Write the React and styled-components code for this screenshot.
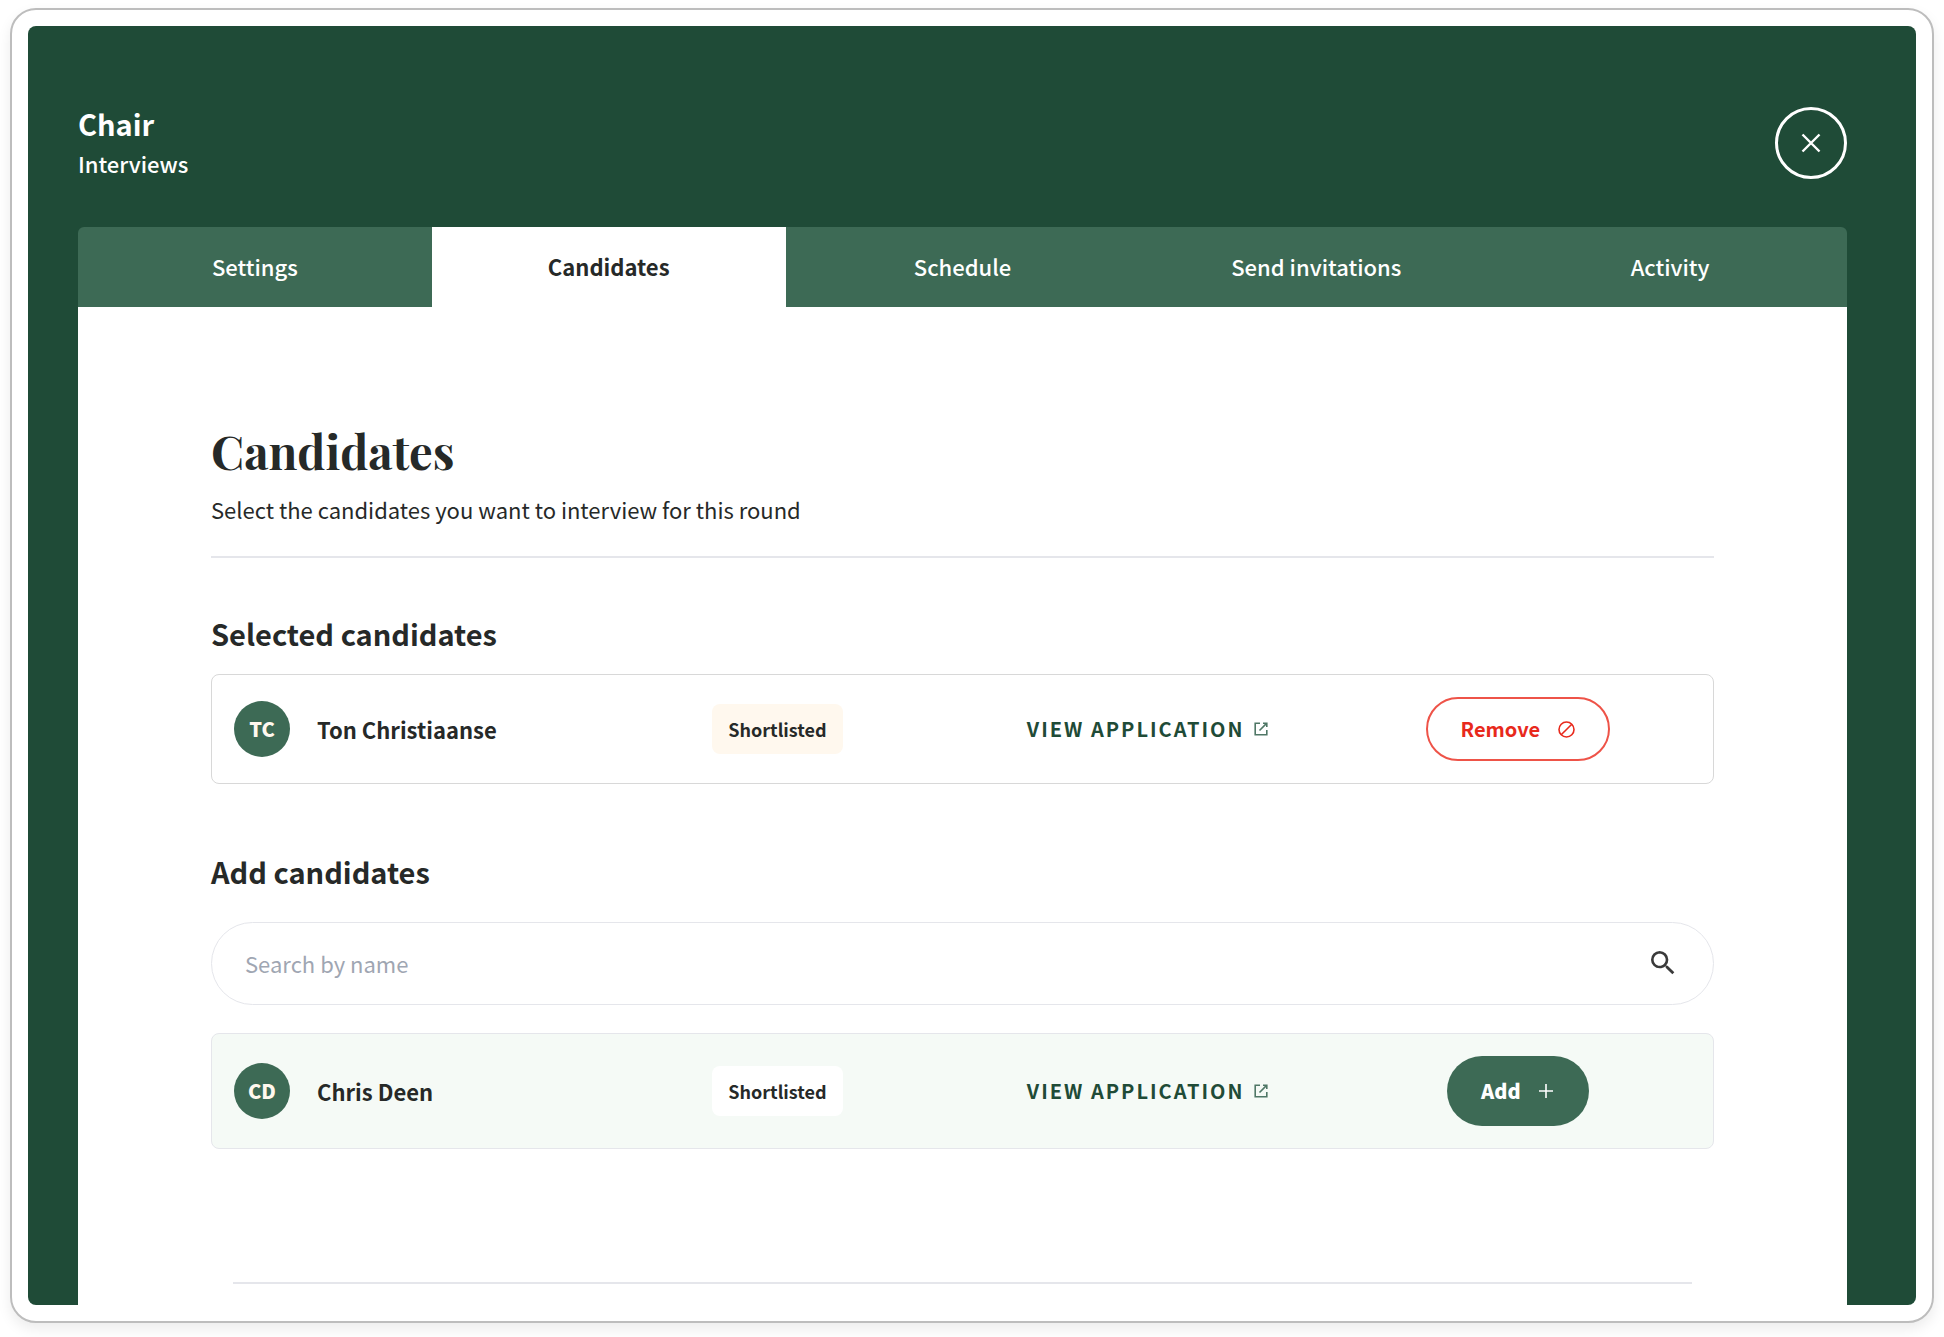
import React, { useState } from 'react'
import styled, { createGlobalStyle } from 'styled-components'
import { MdSearch } from 'react-icons/md'

const GlobalStyle = createGlobalStyle`
  :root {
    --forest: #1f4b37;
    --green: #3d6a55;
    --mint: #f5faf6;
    --cream: #fff8ee;
    --red: #e8291c;
    --text: #262928;
    --line: #e5e6eb;
    --placeholder: #9fa6b2;
  }

  * {
    box-sizing: border-box;
  }

  body {
    margin: 0;
    background: #fff;
    color: var(--text);
    font-family: "Noto Sans CJK SC", "Open Sans", sans-serif;
    font-size: 22px;
    line-height: 32px;
  }

  h1, h2, h3, p {
    margin: 0;
  }

  button, input {
    font: inherit;
  }

  svg {
    display: block;
    flex: none;
  }
`

const Frame = styled.div`
  display: flex;
  height: calc(100vh - 22px);
  margin: 8px 10px 14px;
  padding: 16px;
  border: 2px solid #bdbdbd;
  border-radius: 26px;
  box-shadow: 0 6px 14px rgba(0, 0, 0, 0.08);
`

const Screen = styled.main`
  flex: 1;
  display: flex;
  flex-direction: column;
  padding: 81px 69px 0 50px;
  border-radius: 8px;
  background: var(--forest);
  overflow: hidden;
`

const Header = styled.header`
  display: flex;
  justify-content: space-between;
  align-items: flex-start;
  margin-bottom: 48px;
  color: white;
`

const Title = styled.h1`
  font-size: 29px;
  font-weight: 700;
  line-height: 32px;
`

const Subtitle = styled.p`
  padding-top: 8px;
  font-weight: 500;
`

const CloseButton = styled.button`
  display: grid;
  place-items: center;
  width: 72px;
  height: 72px;
  padding: 0;
  border: 3px solid white;
  border-radius: 50%;
  background: none;
  color: white;
`

const Tabs = styled.nav`
  display: grid;
  grid-template-columns: repeat(5, 1fr);
  flex: none;
  border-radius: 6px 6px 0 0;
  overflow: hidden;
`

const Tab = styled.button`
  height: 80px;
  padding: 0 0 2px;
  border: 0;
  background: ${({ $active }) => ($active ? 'white' : 'var(--green)')};
  color: ${({ $active }) => ($active ? 'var(--text)' : 'white')};
  font-weight: ${({ $active }) => ($active ? 700 : 500)};
`

const Panel = styled.section`
  flex: 1;
  padding: 112px 133px 0;
  background: white;
`

const PageTitle = styled.h2`
  font-family: "Playfair Display", "Liberation Serif", serif;
  font-size: 47px;
  font-weight: 700;
  line-height: 64px;
`

const Intro = styled.p`
  padding: 10px 0 31px;
  border-bottom: 2px solid var(--line);
`

const SectionTitle = styled.h3`
  margin-top: ${({ $top }) => $top}px;
  font-size: 29px;
  font-weight: 700;
  line-height: 40px;
`

const Card = styled.article`
  display: grid;
  grid-template-columns: repeat(4, 1fr);
  gap: 24px;
  align-items: center;
  justify-items: center;
  margin-top: ${({ $available }) => ($available ? 28 : 21)}px;
  padding: 22px;
  border: 1px solid ${({ $available }) => ($available ? 'var(--line)' : '#d8d8d8')};
  border-radius: 8px;
  background: ${({ $available }) => ($available ? 'var(--mint)' : 'white')};
`

const Person = styled.div`
  display: flex;
  align-items: center;
  gap: 27px;
  justify-self: start;
  font-weight: 700;
`

const Avatar = styled.span`
  display: grid;
  place-items: center;
  width: 56px;
  height: 56px;
  border-radius: 50%;
  background: var(--green);
  color: var(--cream);
  font-size: 20px;
  font-weight: 900;
`

const Badge = styled.span`
  padding: 9px 16px;
  border-radius: 8px;
  background: ${({ $available }) => ($available ? 'white' : 'var(--cream)')};
  font-size: 18px;
  font-weight: 700;
`

const ViewLink = styled.a`
  display: flex;
  align-items: center;
  gap: 10px;
  color: var(--forest);
  font-size: 20px;
  font-weight: 700;
  letter-spacing: 2px;
  text-decoration: none;
  white-space: nowrap;
`

const ActionButton = styled.button`
  display: flex;
  align-items: center;
  gap: 18px;
  height: ${({ $solid }) => ($solid ? 70 : 64)}px;
  padding: ${({ $solid }) => ($solid ? '0 36px 0 34px' : '0 33px')};
  border: ${({ $solid }) => ($solid ? '0' : '2px solid #ee5348')};
  border-radius: 35px;
  background: ${({ $solid }) => ($solid ? 'var(--green)' : 'white')};
  color: ${({ $solid }) => ($solid ? 'white' : 'var(--red)')};
  font-size: 20px;
  font-weight: ${({ $solid }) => ($solid ? 900 : 700)};
`

const SearchBox = styled.label`
  display: flex;
  align-items: center;
  height: 83px;
  margin-top: 31px;
  padding: 0 34px 2px 33px;
  border: 1px solid var(--line);
  border-radius: 42px;
  color: #3a3a3a;
`

const SearchInput = styled.input`
  flex: 1;
  min-width: 0;
  padding: 0;
  border: 0;
  outline: 0;
  background: none;
  color: var(--text);
  &::placeholder {
    color: var(--placeholder);
    opacity: 1;
  }
`

const Divider = styled.hr`
  height: 2px;
  margin: 133px 22px 0;
  border: 0;
  background: var(--line);
`

const CloseIcon = () => (
  <svg width="20" height="20" viewBox="0 0 20 20" stroke="currentColor" strokeWidth="2.4">
    <path d="M1.5 1.5l17 17M18.5 1.5l-17 17" />
  </svg>
)

const OpenIcon = () => (
  <svg width="14" height="14" viewBox="0 0 14 14" fill="none" stroke="#4f7766" strokeWidth="1.6">
    <path d="M6 1.2H1.2v11.6h11.6V8" />
    <path d="M9 1.2h3.8V5M12.6 1.4L5.5 8.5" />
  </svg>
)

const BanIcon = () => (
  <svg width="17" height="17" viewBox="0 0 17 17" fill="none" stroke="currentColor" strokeWidth="1.6">
    <circle cx="8.5" cy="8.5" r="7.5" />
    <path d="M3.2 13.8L13.8 3.2" />
  </svg>
)

const PlusIcon = () => (
  <svg width="14" height="14" viewBox="0 0 14 14" stroke="currentColor" strokeWidth="1.6">
    <path d="M7 0v14M0 7h14" />
  </svg>
)

const tabs = ['Settings', 'Candidates', 'Schedule', 'Send invitations', 'Activity']

const CandidateCard = ({ initials, name, available }) => (
  <Card $available={available}>
    <Person>
      <Avatar>{initials}</Avatar>
      <span>{name}</span>
    </Person>
    <Badge $available={available}>Shortlisted</Badge>
    <ViewLink href="#application">VIEW APPLICATION <OpenIcon /></ViewLink>
    {available ? (
      <ActionButton type="button" $solid>Add <PlusIcon /></ActionButton>
    ) : (
      <ActionButton type="button">Remove <BanIcon /></ActionButton>
    )}
  </Card>
)

const App = () => {
  const [active, setActive] = useState('Candidates')

  return (
    <>
      <GlobalStyle />
      <Frame>
        <Screen>
          <Header>
            <div>
              <Title>Chair</Title>
              <Subtitle>Interviews</Subtitle>
            </div>
            <CloseButton type="button" aria-label="Close"><CloseIcon /></CloseButton>
          </Header>
          <Tabs>
            {tabs.map(tab => (
              <Tab key={tab} type="button" $active={tab === active} onClick={() => setActive(tab)}>
                {tab}
              </Tab>
            ))}
          </Tabs>
          <Panel>
            <PageTitle>Candidates</PageTitle>
            <Intro>Select the candidates you want to interview for this round</Intro>
            <SectionTitle $top={55}>Selected candidates</SectionTitle>
            <CandidateCard initials="TC" name="Ton Christiaanse" />
            <SectionTitle $top={67}>Add candidates</SectionTitle>
            <SearchBox>
              <SearchInput type="text" placeholder="Search by name" aria-label="Search by name" />
              <MdSearch size={32} />
            </SearchBox>
            <CandidateCard initials="CD" name="Chris Deen" available />
            <Divider />
          </Panel>
        </Screen>
      </Frame>
    </>
  )
}

export default App
